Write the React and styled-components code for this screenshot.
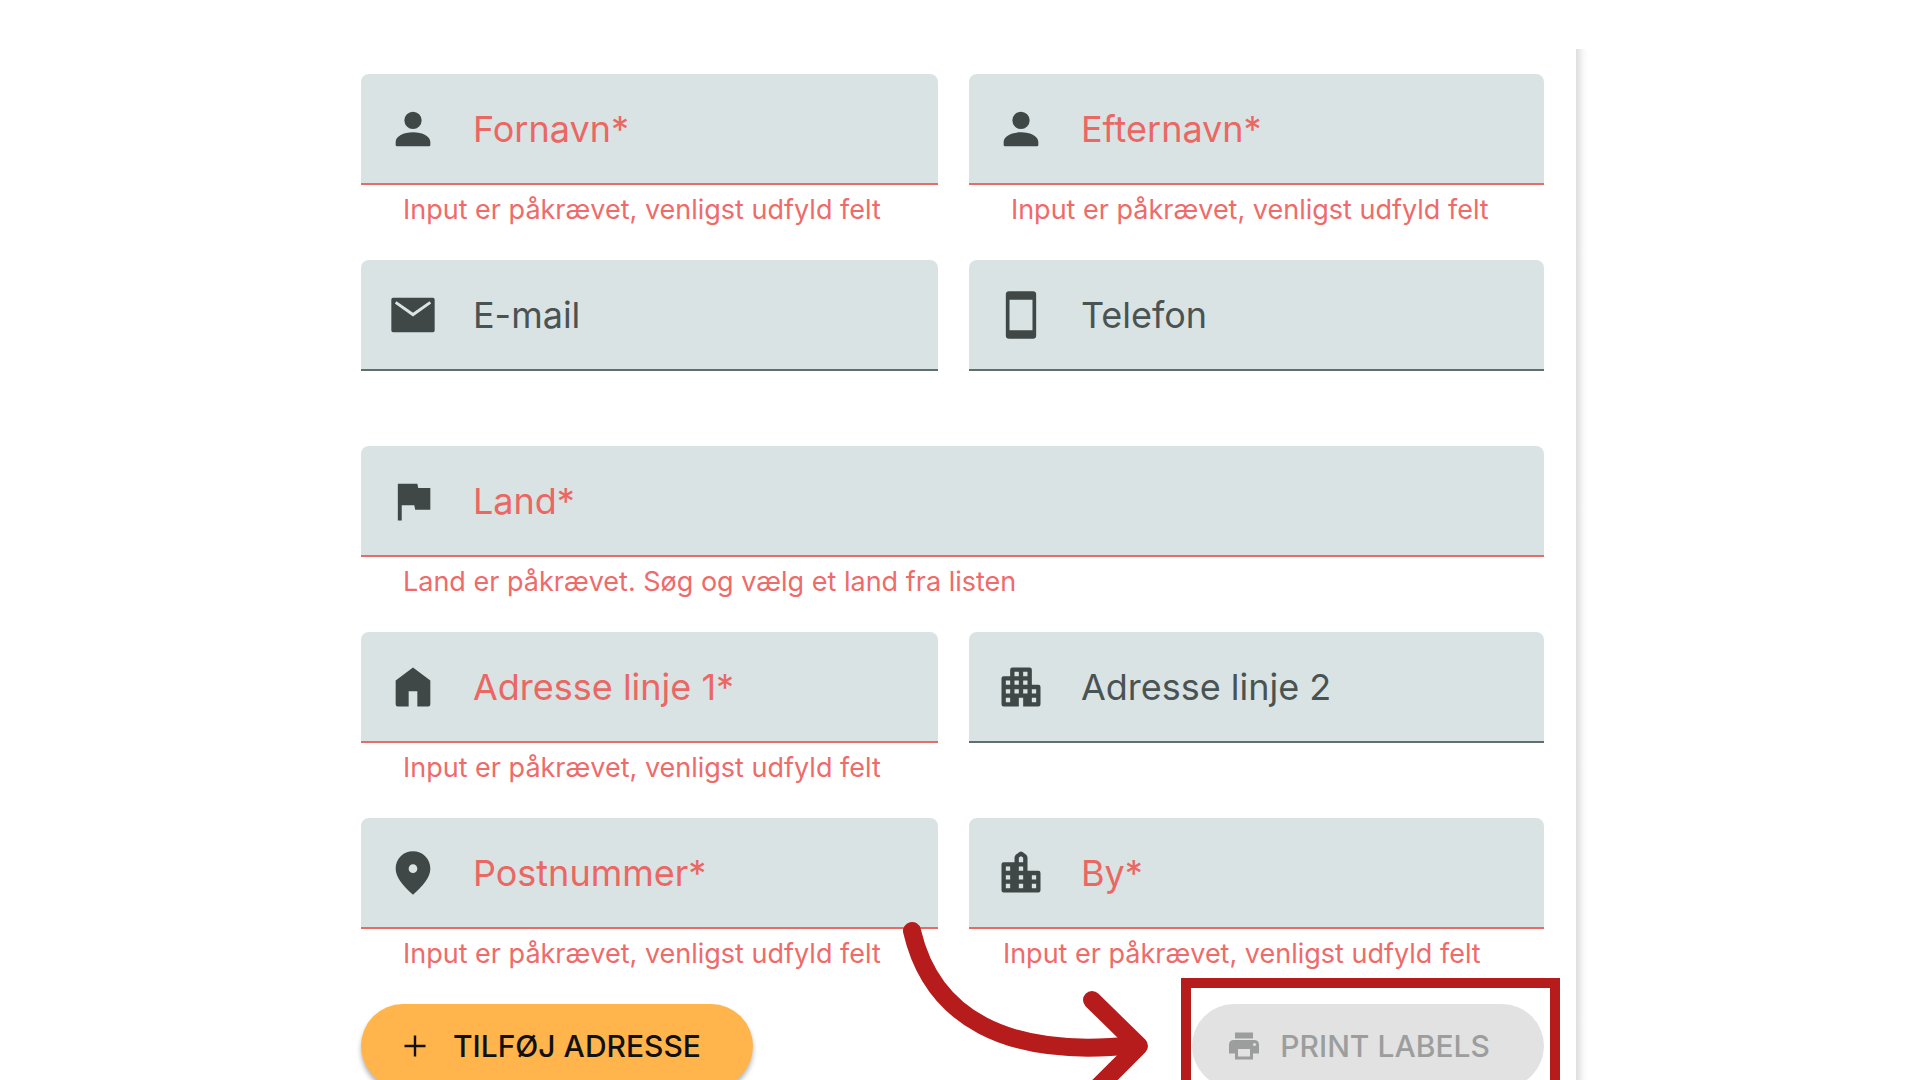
import React from 'react';
import styled, { createGlobalStyle } from 'styled-components';

const GlobalStyle = createGlobalStyle`
  * {
    box-sizing: border-box;
  }

  body {
    margin: 0;
    background: #fff;
    font-family: Inter, sans-serif;
  }
`;

const Page = styled.main`
  display: flex;
  height: 100vh;
  padding: 49px 17.3% 0 18.8%;
  overflow: hidden;
`;

const Panel = styled.div`
  flex: 1;
  min-width: 0;
  padding: 25px 32px 0 0;
`;

const PanelEdge = styled.div`
  width: 12px;
  background: linear-gradient(to right, #dedede, #ececec 35%, #f8f8f8 60%, #fff);
`;

const Form = styled.form`
  display: grid;
  grid-template-columns: minmax(0, 577fr) minmax(0, 575fr);
  grid-auto-rows: 186px;
  column-gap: 31px;
`;

const FieldLayout = styled.div`
  grid-column: ${({ $wide }) => ($wide ? '1 / -1' : 'auto')};
`;

const FieldBox = styled.label`
  display: flex;
  align-items: center;
  gap: 34px;
  height: 111px;
  padding: 1px 26px 0;
  border-bottom: 2px solid ${({ $error }) => ($error ? '#ec6a65' : '#5f6f70')};
  border-radius: 8px 8px 0 0;
  background: #dae3e3;
`;

const FieldIcon = styled.svg`
  flex: none;
  width: 52px;
  height: 52px;
  fill: #3f4747;
`;

const FieldInput = styled.input`
  flex: 1;
  min-width: 0;
  height: 56px;
  padding: 0;
  border: none;
  outline: none;
  background: none;
  color: #3f4747;
  font: 400 36px/56px Inter, sans-serif;

  &::placeholder {
    color: ${({ $error }) => ($error ? '#ea6763' : '#4a5354')};
    opacity: 1;
  }
`;

const HelperText = styled.p`
  margin: 0;
  padding: 7px 0 0 ${({ $compact }) => ($compact ? '34px' : '42px')};
  color: #ee6b6a;
  font-size: 27px;
  line-height: 36px;
  white-space: nowrap;
`;

const Actions = styled.div`
  grid-column: 1 / -1;
  display: flex;
  justify-content: space-between;
  align-items: flex-start;
`;

const PillButton = styled.button`
  display: flex;
  align-items: center;
  height: 84px;
  border: none;
  border-radius: 42px;
  font: 500 30px/40px Inter, sans-serif;
  white-space: nowrap;
`;

const AddButton = styled(PillButton)`
  gap: 20px;
  padding: 0 52px 0 36px;
  background: #ffb54c;
  color: #111;
  box-shadow: 0 4px 5px rgba(0, 0, 0, 0.3);
`;

const PrintButton = styled(PillButton)`
  gap: 18px;
  padding: 0 54px 0 34px;
  background: #e2e2e2;
  color: #9c9e9e;
`;

const ButtonIcon = styled.svg`
  width: 36px;
  height: 36px;
  fill: currentColor;
`;

const PrintLayout = styled.div`
  position: relative;
`;

const Highlight = styled.div`
  position: absolute;
  inset: -26px -16px -26px -11px;
  border: 10px solid #b71c1c;
  pointer-events: none;
`;

const Arrow = styled.svg`
  position: absolute;
  top: -83px;
  right: 392px;
  width: 250px;
  height: 190px;
  fill: none;
  stroke: #b71c1c;
  stroke-width: 18;
  stroke-linecap: round;
  stroke-linejoin: round;
  pointer-events: none;
`;

const REQUIRED = 'Input er påkrævet, venligst udfyld felt';

const icons = {
  person: 'M12 4a4 4 0 1 1 0 8 4 4 0 0 1 0-8zm0 9.500c4.420 0 8 1.900 8 4.500v1.400q0 .6-.6.6H4.600q-.6 0-.6-.6V18c0-2.600 3.580-4.500 8-4.500z',
  mail: 'M2.800 4h18.400q.8 0 .8.8v14.400q0 .8-.8.8H2.800q-.8 0-.8-.8V4.800q0-.8.8-.8zM4.400 5.600L3.600 6.700 12 12.700l8.400-6-.8-1.100L12 11z',
  phone: 'M17.500 1h-11Q5 1 5 2.500v19Q5 23 6.500 23h11q1.500 0 1.500-1.500v-19Q19 1 17.500 1zm-.2 18H6.700V5h10.600z',
  flag: 'M14.400 6L14 4H5v17h1.800v-7h5.800l.4 2h7V6z',
  home: 'M12 3l8 6v11a1 1 0 0 1-1 1h-5v-7h-4v7H5a1 1 0 0 1-1-1V9z',
  apartment: 'M17 11V4a1 1 0 0 0-1-1H8a1 1 0 0 0-1 1v3H4a1 1 0 0 0-1 1v12a1 1 0 0 0 1 1h7v-4h2v4h7a1 1 0 0 0 1-1v-8a1 1 0 0 0-1-1zM7 19H5v-2h2zm0-4H5v-2h2zm0-4H5V9h2zm4 4H9v-2h2zm0-4H9V9h2zm0-4H9V5h2zm4 8h-2v-2h2zm0-4h-2V9h2zm0-4h-2V5h2zm4 12h-2v-2h2zm0-4h-2v-2h2z',
  city: 'M15 11V5q0-.8-.6-1.400l-1.700-1.300q-.7-.5-1.400 0L9.600 3.600Q9 4.200 9 5v2H4a1 1 0 0 0-1 1v12a1 1 0 0 0 1 1h16a1 1 0 0 0 1-1v-8a1 1 0 0 0-1-1zm-8 8H5v-2h2zm0-4H5v-2h2zm0-4H5V9h2zm6 8h-2v-2h2zm0-4h-2v-2h2zm0-4h-2V9h2zm0-4h-2V5q1-1.500 2 0zm6 12h-2v-2h2zm0-4h-2v-2h2z',
  pin: 'M12 2c-4.420 0-8 3.400-8 8 0 4 3.500 8 8 12 4.500-4 8-8 8-12 0-4.600-3.580-8-8-8zm0 10a2 2 0 1 1 0-4 2 2 0 0 1 0 4z',
  plus: 'M19 12.800h-6.200V19h-1.600v-6.200H5v-1.600h6.200V5h1.600v6.200H19z',
  print: 'M19 8H5a3 3 0 0 0-3 3v6h4v4h12v-4h4v-6a3 3 0 0 0-3-3zm-3 11H8v-5h8zm3-7a1 1 0 1 1 0-2 1 1 0 0 1 0 2zM18 3H6v4h12z',
};

const fields = [
  { id: 'fornavn', label: 'Fornavn*', icon: 'person', helper: REQUIRED },
  { id: 'efternavn', label: 'Efternavn*', icon: 'person', helper: REQUIRED },
  { id: 'email', label: 'E-mail', icon: 'mail' },
  { id: 'telefon', label: 'Telefon', icon: 'phone' },
  { id: 'land', label: 'Land*', icon: 'flag', wide: true, helper: 'Land er påkrævet. Søg og vælg et land fra listen' },
  { id: 'adresse1', label: 'Adresse linje 1*', icon: 'home', helper: REQUIRED },
  { id: 'adresse2', label: 'Adresse linje 2', icon: 'apartment' },
  { id: 'postnummer', label: 'Postnummer*', icon: 'pin', helper: REQUIRED },
  { id: 'by', label: 'By*', icon: 'city', helper: REQUIRED, compact: true },
];

const Field = ({ id, label, icon, helper, wide, compact }) => (
  <FieldLayout $wide={wide}>
    <FieldBox htmlFor={id} $error={!!helper}>
      <FieldIcon viewBox="0 0 24 24" aria-hidden="true">
        <path fillRule="evenodd" d={icons[icon]} />
      </FieldIcon>
      <FieldInput id={id} placeholder={label} aria-label={label} $error={!!helper} />
    </FieldBox>
    {helper && <HelperText $compact={compact}>{helper}</HelperText>}
  </FieldLayout>
);

const App = () => (
  <>
    <GlobalStyle />
    <Page>
      <Panel>
        <Form onSubmit={(e) => e.preventDefault()}>
          {fields.map((field) => (
            <Field key={field.id} {...field} />
          ))}
          <Actions>
            <AddButton type="button">
              <ButtonIcon viewBox="0 0 24 24" aria-hidden="true">
                <path d={icons.plus} />
              </ButtonIcon>
              TILFØJ ADRESSE
            </AddButton>
            <PrintLayout>
              <PrintButton type="button" disabled>
                <ButtonIcon viewBox="0 0 24 24" aria-hidden="true">
                  <path fillRule="evenodd" d={icons.print} />
                </ButtonIcon>
                PRINT LABELS
              </PrintButton>
              <Highlight />
              <Arrow viewBox="0 0 250 190" aria-hidden="true">
                <path d="M10 10C30 96 104 138 232 124" />
                <path d="M190 79L237 125L190 172" />
              </Arrow>
            </PrintLayout>
          </Actions>
        </Form>
      </Panel>
      <PanelEdge />
    </Page>
  </>
);

export default App;
